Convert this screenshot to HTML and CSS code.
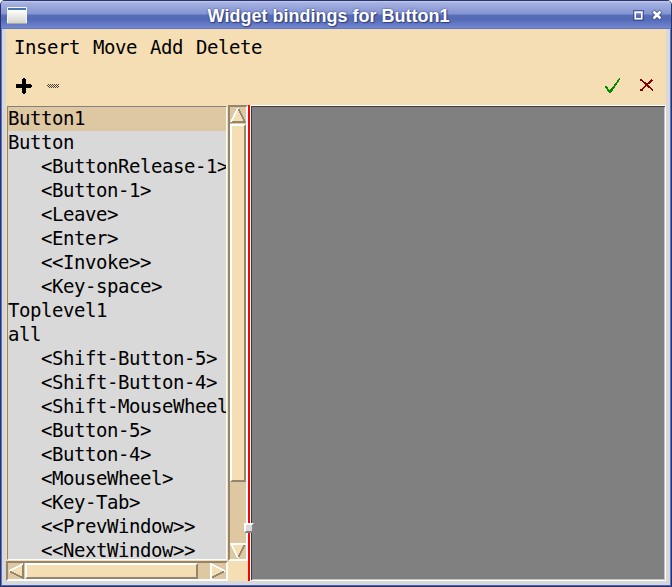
FILE: index.html
```html
<!DOCTYPE html>
<html lang="en">
<head>
<meta charset="utf-8">
<title>Widget bindings for Button1</title>
<link rel="stylesheet" href="styles.css">
</head>
<body>
<div class="window">
  <header class="titlebar">
    <svg class="app-icon" width="20" height="17" viewBox="0 0 20 17"><defs><linearGradient id="paper" x1="0" y1="0" x2="0" y2="1"><stop offset="0" stop-color="#fff"/><stop offset="1" stop-color="#d4d4ce"/></linearGradient></defs><rect width="20" height="17" rx="1" fill="#f4f4f2"/><rect x="1" y="3" width="18" height="13" fill="url(#paper)"/><rect x="1" y="1" width="18" height="2" fill="#4876ae"/><path d="M0 16.5H20" stroke="#aaa9a2"/></svg>
    <h1 class="title">Widget bindings for Button1</h1>
    <svg class="controls" width="32" height="16" viewBox="0 0 32 16"><g fill="none" stroke="#33417f" stroke-opacity=".7"><rect x="3.500" y="3.500" width="10" height="10"/><path d="M23 4l8 8M31 4l-8 8" stroke-width="4.500"/></g><rect x="5.250" y="5.250" width="6.500" height="6.500" fill="none" stroke="#fff" stroke-width="1.500"/><path d="M23.500 4.500l7 7M30.500 4.500l-7 7" stroke="#fff" stroke-width="2.500"/></svg>
  </header>
  <main class="content">
    <nav class="menu"><span>Insert</span><span>Move</span><span>Add</span><span>Delete</span></nav>
    <div class="toolbar">
      <svg width="16" height="16" viewBox="0 0 16 16" shape-rendering="crispEdges"><path d="M7 0h2v1h1v5h5v1h1v2h-1v1h-5v5H9v1H7v-1H6v-5H0V6h6V1h1z"/></svg>
      <svg class="minus" width="12" height="4" viewBox="0 0 12 4" shape-rendering="crispEdges"><path d="M1 .5h11M0 1.500h12M1 2.500h11M2 3.500h10" stroke="#444" stroke-dasharray="1 1"/></svg>
      <svg class="check" width="15" height="15" viewBox="0 0 15 15" shape-rendering="crispEdges"><path d="M0 8h2v1h1v2h1v1h1v-1h1v-1h1V9h1V8h1V6h1V5h1V4h1V2h1V1h1V0h1v2h-1v2h-1v1h-1v2h-1v1h-1v2H9v1H8v2H7v1H6v1H4v-1H3v-1H2v-2H1v-1H0z" fill="#008b00"/></svg>
      <svg class="cancel" width="14" height="12" viewBox="0 0 14 12" shape-rendering="crispEdges"><path d="M1 .5L13 11.500M12.500 .5L1 11.500" stroke="#800000" stroke-width="1.700"/><path d="M0 0h2v2H0zM0 10h3v2H0z" fill="#800000"/></svg>
    </div>
    <div class="panes">
      <div class="browser">
        <ul class="list">
          <li class="selected">Button1</li><li>Button</li>
          <li class="event">&lt;ButtonRelease-1&gt;</li><li class="event">&lt;Button-1&gt;</li><li class="event">&lt;Leave&gt;</li><li class="event">&lt;Enter&gt;</li><li class="event">&lt;&lt;Invoke&gt;&gt;</li><li class="event">&lt;Key-space&gt;</li>
          <li>Toplevel1</li><li>all</li>
          <li class="event">&lt;Shift-Button-5&gt;</li><li class="event">&lt;Shift-Button-4&gt;</li><li class="event">&lt;Shift-MouseWheel</li><li class="event">&lt;Button-5&gt;</li><li class="event">&lt;Button-4&gt;</li><li class="event">&lt;MouseWheel&gt;</li><li class="event">&lt;Key-Tab&gt;</li><li class="event">&lt;&lt;PrevWindow&gt;&gt;</li><li class="event">&lt;&lt;NextWindow&gt;&gt;</li>
        </ul>
        <div class="vscroll">
          <svg width="16" height="16" viewBox="0 0 16 16" shape-rendering="crispEdges"><path d="M0 16L8 0L16 16z" fill="#f5deb3"/><path d="M8 1L15 15H0" fill="none" stroke="#93866c" stroke-width="2"/><path d="M1 15L8 1" stroke="#fff" stroke-width="2"/></svg>
          <div class="vthumb"></div>
          <svg class="end" width="16" height="16" viewBox="0 0 16 16" shape-rendering="crispEdges"><path d="M0 0H16L8 16z" fill="#f5deb3"/><path d="M15 1L8 15" stroke="#93866c" stroke-width="2"/><path d="M8 15L1 1H16" fill="none" stroke="#fff" stroke-width="2"/></svg>
        </div>
        <div class="hscroll">
          <svg width="16" height="16" viewBox="0 0 16 16" shape-rendering="crispEdges"><path d="M16 0V16L0 8z" fill="#f5deb3"/><path d="M1 8L15 15V0" fill="none" stroke="#93866c" stroke-width="2"/><path d="M1 8L15 1" stroke="#fff" stroke-width="2"/></svg>
          <div class="hthumb"></div>
          <svg class="end" width="16" height="16" viewBox="0 0 16 16" shape-rendering="crispEdges"><path d="M0 0V16L16 8z" fill="#f5deb3"/><path d="M1 15L15 8" stroke="#93866c" stroke-width="2"/><path d="M1 16V1L15 8" fill="none" stroke="#fff" stroke-width="2"/></svg>
        </div>
      </div>
      <div class="sash"><span class="handle"></span></div>
      <div class="editor"></div>
    </div>
  </main>
</div>
</body>
</html>
```
FILE: styles.css
```css
* { box-sizing: border-box; }
body { margin: 0; background: #fff; }
svg { display: block; flex: none; }
.window {
  width: 672px; height: 587px; padding: 0 4px 4px;
  display: flex; flex-direction: column;
  background: #d8d8d8; border: 1px solid #27316a; border-top: 0;
  border-radius: 5px 5px 0 0; overflow: hidden;
  box-shadow: inset 1px 0 #5a74c8, inset -1px 0 #5a74c8, inset 0 -1px #4861b4;
}
.titlebar {
  height: 29px; flex: none; margin: 0 -4px; padding: 0 9px 0 6px;
  display: flex; align-items: center; border-top: 1px solid #2b356b;
  background: linear-gradient(#c4cdef 0, #a4b0e0 2px, #8494d2 13px, #586fba 14px, #5469b4 18px, #6b80cc 25px, #7589d2 27px, #4d62ae 28px);
}
.app-icon { margin-top: 1px; }
.title {
  flex: 1; margin: 2px 6px 0 6px; text-align: center; color: #fff;
  font: bold 18px/24px "Liberation Sans", sans-serif; text-shadow: 0 0 2px #2d3b82, 1px 1px 1px #33417f;
}
.content {
  flex: 1; min-height: 0; margin: 0 1px 1px; background: #f5deb3; color: #000;
  display: flex; flex-direction: column;
  font: 19px/24px "DejaVu Sans Mono", monospace; letter-spacing: -.438px;
}
.menu { height: 37px; padding: 6px 8px 0; display: flex; gap: 13px; flex: none; }
.toolbar { height: 39px; padding: 0 12px 0 10px; display: flex; align-items: center; flex: none; }
.minus { margin-left: 15px; }
.check { margin-left: auto; }
.cancel { margin-left: 20px; margin-top: -2px; }
.panes { flex: 1; min-height: 0; display: flex; }
.browser { width: 242px; display: grid; grid-template: 456px 20px / 222px 20px; }
.list {
  list-style: none; margin: 1px 1px 1px 1px; padding: 0; overflow: hidden;
  background: #d9d9d9; border: 1px solid; border-color: #828282 #fff #fff #93866c;
}
.list li { height: 24px; line-height: 22px; white-space: pre; }
.list .event { padding-left: 33px; }
.list .selected { background: #dec8a2; }
.vscroll, .hscroll { background: #ddc8a1; border: 2px solid; border-color: #93866c #fff #fff #93866c; display: flex; }
.vscroll { flex-direction: column; }
.vthumb, .hthumb { background: #f5deb3; border: 2px solid; border-color: #fff #93866c #93866c #fff; }
.vthumb { height: 358px; margin-top: 1px; }
.hthumb { width: 173px; margin-left: 1px; }
.end { margin: auto 0 0 auto; }
.sash { position: relative; width: 2px; background: #f00; flex: none; }
.handle { position: absolute; left: -4px; bottom: 48px; width: 10px; height: 10px; background: #d9d9d9; border: 2px solid; border-color: #fff #828282 #828282 #fff; }
.editor { flex: 1; background: #808080; border: 1px solid #fff; box-shadow: inset 1px 1px #3c3c3c, inset -1px -1px #c3c3c3; }
```
